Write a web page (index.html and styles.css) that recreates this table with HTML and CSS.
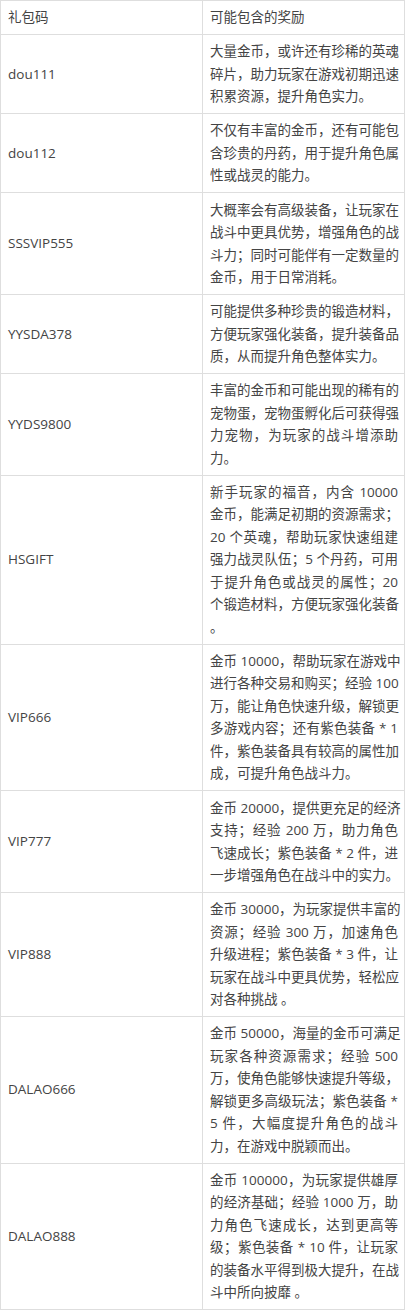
FILE: index.html
```html
<!DOCTYPE html>
<html lang="zh-CN">
<head>
<meta charset="utf-8">
<title>礼包码</title>
<link rel="stylesheet" href="styles.css">
</head>
<body>
<table class="codes">
  <colgroup><col class="col-code"><col class="col-reward"></colgroup>
  <thead>
    <tr><th class="code">礼包码</th><th class="reward">可能包含的奖励</th></tr>
  </thead>
  <tbody>
    <tr><td class="code">dou111</td><td class="reward">
      <span class="ln j">大量金币，或许还有珍稀的英魂</span>
      <span class="ln j">碎片，助力玩家在游戏初期迅速</span>
      <span class="ln">积累资源，提升角色实力。</span>
    </td></tr>
    <tr><td class="code">dou112</td><td class="reward">
      <span class="ln j">不仅有丰富的金币，还有可能包</span>
      <span class="ln j">含珍贵的丹药，用于提升角色属</span>
      <span class="ln">性或战灵的能力。</span>
    </td></tr>
    <tr><td class="code">SSSVIP555</td><td class="reward">
      <span class="ln j">大概率会有高级装备，让玩家在</span>
      <span class="ln j">战斗中更具优势，增强角色的战</span>
      <span class="ln j">斗力；同时可能伴有一定数量的</span>
      <span class="ln">金币，用于日常消耗。</span>
    </td></tr>
    <tr><td class="code">YYSDA378</td><td class="reward">
      <span class="ln j">可能提供多种珍贵的锻造材料，</span>
      <span class="ln j">方便玩家强化装备，提升装备品</span>
      <span class="ln">质，从而提升角色整体实力。</span>
    </td></tr>
    <tr><td class="code">YYDS9800</td><td class="reward">
      <span class="ln j">丰富的金币和可能出现的稀有的</span>
      <span class="ln j">宠物蛋，宠物蛋孵化后可获得强</span>
      <span class="ln j">力宠物，为玩家的战斗增添助</span>
      <span class="ln">力。</span>
    </td></tr>
    <tr><td class="code">HSGIFT</td><td class="reward">
      <span class="ln j">新手玩家的福音，内含 10000</span>
      <span class="ln j">金币，能满足初期的资源需求；</span>
      <span class="ln j">20 个英魂，帮助玩家快速组建</span>
      <span class="ln j">强力战灵队伍；5 个丹药，可用</span>
      <span class="ln j">于提升角色或战灵的属性；20</span>
      <span class="ln j">个锻造材料，方便玩家强化装备</span>
      <span class="ln">。</span>
    </td></tr>
    <tr><td class="code">VIP666</td><td class="reward">
      <span class="ln j">金币 10000，帮助玩家在游戏中</span>
      <span class="ln j">进行各种交易和购买；经验 100</span>
      <span class="ln j">万，能让角色快速升级，解锁更</span>
      <span class="ln j">多游戏内容；还有紫色装备 * 1</span>
      <span class="ln j">件，紫色装备具有较高的属性加</span>
      <span class="ln">成，可提升角色战斗力。</span>
    </td></tr>
    <tr><td class="code">VIP777</td><td class="reward">
      <span class="ln j">金币 20000，提供更充足的经济</span>
      <span class="ln j">支持；经验 200 万，助力角色</span>
      <span class="ln j">飞速成长；紫色装备 * 2 件，进</span>
      <span class="ln">一步增强角色在战斗中的实力。</span>
    </td></tr>
    <tr><td class="code">VIP888</td><td class="reward">
      <span class="ln j">金币 30000，为玩家提供丰富的</span>
      <span class="ln j">资源；经验 300 万，加速角色</span>
      <span class="ln j">升级进程；紫色装备 * 3 件，让</span>
      <span class="ln j">玩家在战斗中更具优势，轻松应</span>
      <span class="ln">对各种挑战 。</span>
    </td></tr>
    <tr><td class="code">DALAO666</td><td class="reward">
      <span class="ln j">金币 50000，海量的金币可满足</span>
      <span class="ln j">玩家各种资源需求；经验 500</span>
      <span class="ln">万，使角色能够快速提升等级，</span>
      <span class="ln j">解锁更多高级玩法；紫色装备 *</span>
      <span class="ln j">5 件，大幅度提升角色的战斗</span>
      <span class="ln">力，在游戏中脱颖而出。</span>
    </td></tr>
    <tr><td class="code">DALAO888</td><td class="reward">
      <span class="ln j">金币 100000，为玩家提供雄厚</span>
      <span class="ln j">的经济基础；经验 1000 万，助</span>
      <span class="ln j">力角色飞速成长，达到更高等</span>
      <span class="ln j">级；紫色装备 * 10 件，让玩家</span>
      <span class="ln j">的装备水平得到极大提升，在战</span>
      <span class="ln">斗中所向披靡 。</span>
    </td></tr>
  </tbody>
</table>
</body>
</html>
```

FILE: styles.css
```css
html, body {
  margin: 0;
  padding: 0;
  background: #ffffff;
}

.codes {
  border-collapse: collapse;
  width: 404px;
  table-layout: fixed;
  font-family: "Open Sans", "Noto Sans CJK SC", sans-serif;
  font-size: 13.5px;
  line-height: 22.5px;
  color: #444444;
}

.col-code,
.col-reward {
  width: 202px;
}

.codes th,
.codes td {
  box-sizing: border-box;
  border: 1px solid #dedede;
  padding: 5.3px 6px 5.3px 7px;
  text-align: left;
  vertical-align: middle;
  font-weight: normal;
  overflow: hidden;
}

.ln {
  display: block;
  white-space: nowrap;
  text-align: left;
}

.ln.j {
  text-align: justify;
  text-align-last: justify;
}
```
